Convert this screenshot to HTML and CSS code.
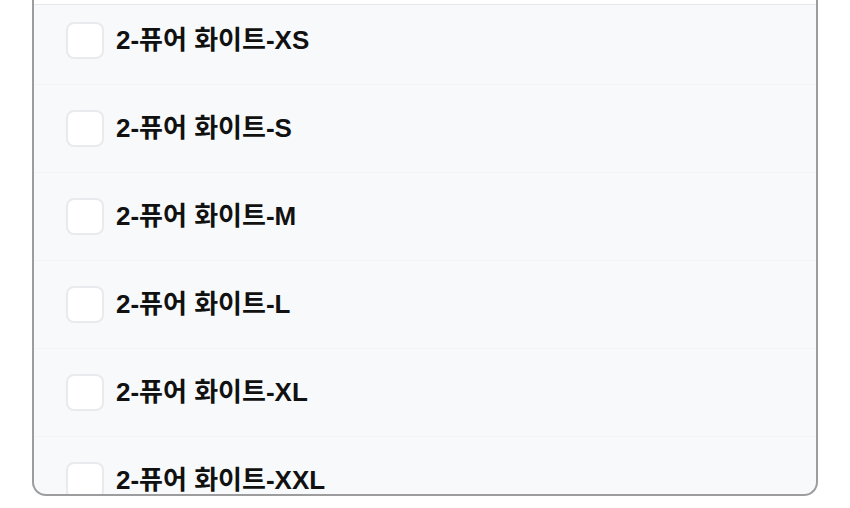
FILE: index.html
```html
<!DOCTYPE html>
<html lang="ko">
<head>
  <meta charset="UTF-8">
  <meta name="viewport" content="width=device-width, initial-scale=1.0">
  <title>옵션 선택</title>
  <link rel="stylesheet" href="styles.css">
</head>
<body>
  <div class="option-panel">
    <div class="panel-head"></div>
    <div class="option-scroll">
      <ul class="option-list">
        <li class="option-row"><label><span class="check"></span><span class="name">2-퓨어 화이트-XS</span></label></li>
        <li class="option-row"><label><span class="check"></span><span class="name">2-퓨어 화이트-S</span></label></li>
        <li class="option-row"><label><span class="check"></span><span class="name">2-퓨어 화이트-M</span></label></li>
        <li class="option-row"><label><span class="check"></span><span class="name">2-퓨어 화이트-L</span></label></li>
        <li class="option-row"><label><span class="check"></span><span class="name">2-퓨어 화이트-XL</span></label></li>
        <li class="option-row"><label><span class="check"></span><span class="name">2-퓨어 화이트-XXL</span></label></li>
      </ul>
    </div>
  </div>
</body>
</html>
```

FILE: styles.css
```css
html {
  box-sizing: border-box;
}
*, *::before, *::after {
  box-sizing: inherit;
}
body {
  margin: 0;
  background: #ffffff;
  font-family: "Liberation Sans", "Noto Sans CJK KR", sans-serif;
}
.option-panel {
  margin: 0 32px 0 32px;
  width: 786px;
  height: 496px;
  background: #f8f9fb;
  border: 2px solid #9d9d9f;
  border-top: none;
  border-radius: 0 0 14px 14px;
  overflow: hidden;
  display: flex;
  flex-direction: column;
}
.panel-head {
  height: 5px;
  flex-shrink: 0;
  background: #ffffff;
  border-bottom: 1px solid #e6e7ea;
}
.option-scroll {
  flex: 1;
  overflow: hidden;
}
.option-list {
  list-style: none;
  margin: -8px 0 0;
  padding: 0;
}
.option-row {
  border-bottom: 1px solid #f3f4f6;
}
.option-row label {
  display: flex;
  align-items: center;
  gap: 12px;
  padding: 25px 32px;
  cursor: pointer;
}
.check {
  width: 38px;
  height: 37px;
  flex-shrink: 0;
  background: #ffffff;
  border: 2px solid #e9eaed;
  border-radius: 8px;
}
.name {
  font-size: 26px;
  font-weight: 700;
  color: #111111;
  line-height: 1;
  position: relative;
  top: -1px;
}
```
